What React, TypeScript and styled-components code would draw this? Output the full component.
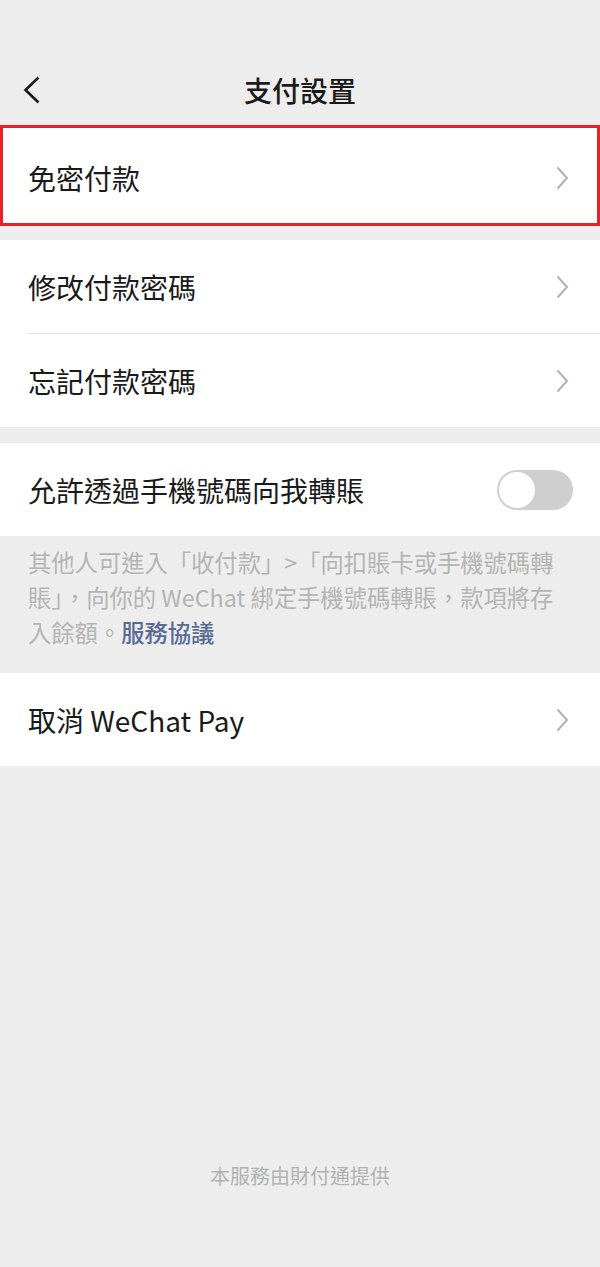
import * as React from "react";
import styled, { createGlobalStyle } from "styled-components";

const GlobalStyle = createGlobalStyle`
  html, body {
    margin: 0;
    padding: 0;
    background: #ededed;
  }
  body {
    font-family: "Noto Sans CJK TC", "Noto Sans", Roboto, sans-serif;
    color: #1a1a1a;
  }
`;

const Page = styled.div`
  min-height: 1267px;
  display: flex;
  flex-direction: column;
  background: #ededed;
`;

const Header = styled.div`
  height: 125px;
  display: grid;
  grid-template-columns: 37px 1fr 37px;
  align-items: center;
  padding: 55px 23px 0;
  box-sizing: border-box;
`;

const BackButton = styled.div`
  width: 18px;
  height: 28px;
  display: flex;
`;

const Title = styled.h1`
  margin: 0;
  text-align: center;
  font-size: 28px;
  font-weight: 500;
  color: #1a1a1a;
  line-height: 1;
`;

const Highlight = styled.div`
  border: 3px solid #e8202a;
  background: #fff;
  padding-top: 5px;
`;

const Group = styled.div<{ $gap?: number }>`
  background: #fff;
  margin-top: ${(p) => p.$gap ?? 0}px;
`;

const Row = styled.div<{ $divider?: boolean; $inset?: number; $height?: number }>`
  height: ${(p) => p.$height ?? 93}px;
  display: flex;
  align-items: center;
  padding: 0 ${(p) => 31 - (p.$inset ?? 0)}px 0 ${(p) => 28 - (p.$inset ?? 0)}px;
  box-sizing: border-box;
  position: relative;
  ${(p) =>
    p.$divider &&
    `
    &::after {
      content: "";
      position: absolute;
      left: 27px;
      right: 0;
      bottom: -1px;
      height: 1px;
      background: #e5e5e5;
    }
  `}
`;

const RowGap = styled.div`
  height: 1px;
`;

const Label = styled.span`
  flex: 1;
  font-size: 28px;
  color: #1a1a1a;
`;

const Switch = styled.div<{ $on?: boolean }>`
  width: 76px;
  height: 40px;
  border-radius: 20px;
  background: ${(p) => (p.$on ? "#07c160" : "#cfcfcf")};
  position: relative;
  margin-right: -4px;
  &::after {
    content: "";
    position: absolute;
    top: 2px;
    left: ${(p) => (p.$on ? "38px" : "2px")};
    width: 36px;
    height: 36px;
    border-radius: 50%;
    background: #fff;
  }
`;

const Note = styled.p`
  margin: 0;
  padding: 9px 28px 23px;
  font-size: 23.3px;
  line-height: 35px;
  color: #b4b4b4;
`;

const Link = styled.span`
  color: #576b95;
  font-weight: 500;
`;

const Footer = styled.div`
  margin-top: auto;
  padding-bottom: 77px;
  text-align: center;
  font-size: 20px;
  color: #b2b2b2;
`;

function Chevron() {
  return (
    <svg width="13" height="24" viewBox="0 0 13 24">
      <polyline
        points="1.5,1.5 11,12 1.5,22.5"
        fill="none"
        stroke="#b2b2b2"
        strokeWidth="2"
      />
    </svg>
  );
}

export default function App() {
  return (
    <>
      <GlobalStyle />
      <Page>
        <Header>
          <BackButton>
            <svg width="18" height="28" viewBox="0 0 18 28">
              <polyline
                points="15.5,1.5 2.5,14 15.5,26.5"
                fill="none"
                stroke="#1a1a1a"
                strokeWidth="2.6"
              />
            </svg>
          </BackButton>
          <Title>支付設置</Title>
          <span />
        </Header>

        <Highlight>
          <Row $inset={3} $height={90}>
            <Label>免密付款</Label>
            <Chevron />
          </Row>
        </Highlight>

        <Group $gap={14}>
          <Row $divider>
            <Label>修改付款密碼</Label>
            <Chevron />
          </Row>
          <RowGap />
          <Row>
            <Label>忘記付款密碼</Label>
            <Chevron />
          </Row>
        </Group>

        <Group $gap={16}>
          <Row>
            <Label>允許透過手機號碼向我轉賬</Label>
            <Switch />
          </Row>
        </Group>

        <Note>
          其他人可進入「收付款」&gt;「向扣賬卡或手機號碼轉
          <br />
          賬」，向你的 WeChat 綁定手機號碼轉賬，款項將存
          <br />
          入餘額。<Link>服務協議</Link>
        </Note>

        <Group>
          <Row>
            <Label>取消 WeChat Pay</Label>
            <Chevron />
          </Row>
        </Group>

        <Footer>本服務由財付通提供</Footer>
      </Page>
    </>
  );
}
